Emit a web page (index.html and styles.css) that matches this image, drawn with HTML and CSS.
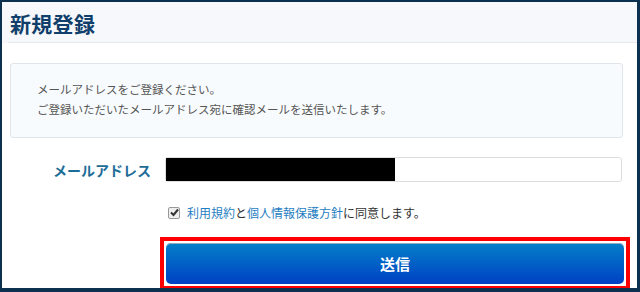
FILE: index.html
```html
<!DOCTYPE html>
<html lang="ja">
<head>
<meta charset="utf-8">
<link rel="stylesheet" href="styles.css">
</head>
<body>
<div class="frame">
  <div class="header"><h1 class="title">新規登録</h1></div>
  <div class="info">
    <p>メールアドレスをご登録ください。</p>
    <p>ご登録いただいたメールアドレス宛に確認メールを送信いたします。</p>
  </div>
  <div class="row">
    <label class="label">メールアドレス</label>
    <div class="input"><span class="mask"></span></div>
  </div>
  <div class="agree">
    <span class="check"><svg width="9" height="9" viewBox="0 0 9 9"><path d="M1 4.5 L3.5 7 L8 1.5" fill="none" stroke="#333" stroke-width="2"/></svg></span>
    <span><a class="link">利用規約</a>と<a class="link">個人情報保護方針</a>に同意します。</span>
  </div>
  <div class="btnwrap">
    <div class="highlight"><button class="submit">送信</button></div>
  </div>
</div>
</body>
</html>
```
FILE: styles.css
```css
html, body { margin: 0; padding: 0; }
body {
  width: 640px; height: 292px; box-sizing: border-box;
  background: #0c3150;
  padding: 2px 3px 4px 2px;
  font-family: "Noto Sans CJK JP", "Noto Sans", sans-serif;
  overflow: hidden;
}
.frame {
  background: #fff;
  height: 100%;
  display: flex; flex-direction: column;
  overflow: hidden;
}
.header {
  background: #f6f8fb;
  height: 41px;
  flex: none;
  display: flex; align-items: center;
  padding-left: 8px;
  position: relative;
}
.header::after {
  content: ""; position: absolute; left: 6px; right: 0; bottom: 0;
  height: 1px; background: #e6e9ec;
}
.title {
  margin: 0; font-size: 21px; font-weight: 700; color: #113f6b;
  letter-spacing: 0.3px;
}
.info {
  flex: none;
  margin: 20px 14px 0 8px;
  background: #f8fbfd;
  border: 1px solid #dfe5ea;
  border-radius: 3px;
  padding: 15px 26px 16px;
  height: 42px;
}
.info p {
  margin: 0; font-size: 11.5px; line-height: 20px; color: #555;
}
.row {
  flex: none;
  display: flex; align-items: center;
  margin-top: 19px;
}
.label {
  width: 163px; text-align: right; padding-right: 14px; box-sizing: border-box;
  font-size: 14px; font-weight: 700; color: #1c6c98;
}
.input {
  width: 457px; height: 25px; box-sizing: border-box;
  border: 1px solid #dcdfe2; border-radius: 3px; background: #fff;
  display: flex;
}
.mask { width: 229px; background: #000; }
.agree {
  flex: none;
  display: flex; align-items: center;
  margin-top: 22px; padding-left: 166px;
  font-size: 12px; color: #333;
}
.check {
  width: 10px; height: 10px; border: 1px solid #999; border-radius: 2px;
  background: #eee; display: inline-flex; align-items: center; justify-content: center;
  margin-right: 7px;
}
.link { color: #1f7ec2; }
.btnwrap {
  flex: none;
  margin-top: 16px; padding-left: 158px;
}
.highlight {
  width: 470px; box-sizing: border-box;
  border: 4px solid #ff0000; padding: 2px;
  background: #fff;
}
.submit {
  display: block; width: 100%; height: 41px;
  border: 0; border-radius: 5px;
  background: linear-gradient(#0480c8, #0040c4);
  color: #fff; font-family: inherit; font-size: 15px; font-weight: 700;
  box-shadow: 0 1px 0 #9ab inset;
}
```
